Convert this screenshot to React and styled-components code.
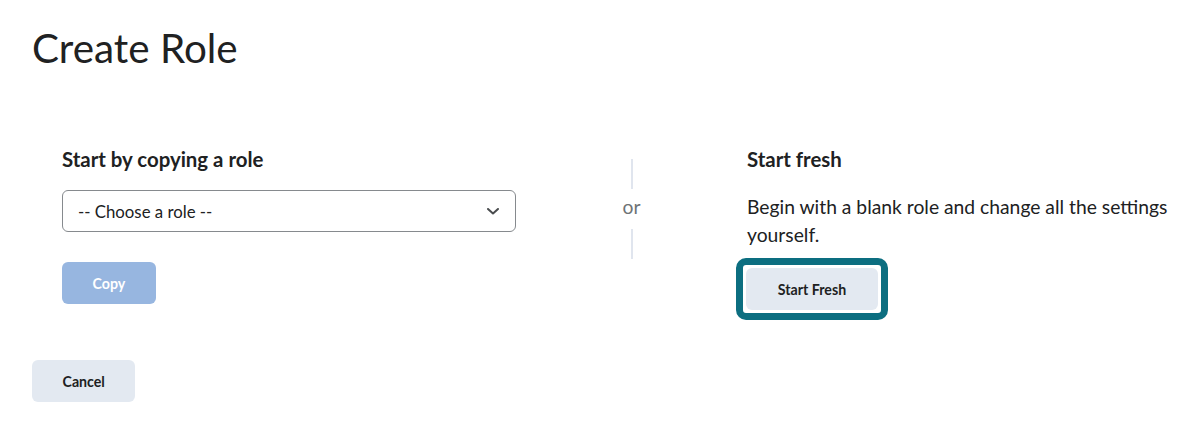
import React, { useState } from "react";
import styled, { createGlobalStyle } from "styled-components";

const GlobalStyle = createGlobalStyle`
    body {
        margin: 0;
        background: #ffffff;
        font-family: Lato, "Open Sans", sans-serif;
        color: #202122;
    }
`

const Page = styled.div`
    padding: 24px 0 0 32px;
`
const Title = styled.h1`
    margin: 0;
    font-size: 40.4px;
    line-height: 48px;
    font-weight: 400;
    color: #202122;
`
const Choices = styled.div`
    display: flex;
    margin-top: 73px;
    padding-left: 30px;
`
const Column = styled.div`
    display: flex;
    flex-direction: column;
    align-items: flex-start;
    width: ${props => props.width || "auto"};
    flex: ${props => props.grow ? 1 : "none"};
`
const Heading = styled.h2`
    margin: 0;
    font-size: 20.4px;
    line-height: 28px;
    font-weight: 700;
    color: #202122;
`
const Text = styled.p`
    margin: 20px 0 0;
    font-size: 19.3px;
    line-height: 28px;
    font-weight: 400;
    color: #202122;
`
const SelectWrap = styled.div`
    position: relative;
    width: 100%;
    margin-top: 17px;
    svg {
        position: absolute;
        right: 17px;
        top: 18px;
        pointer-events: none;
    }
`
const Select = styled.select`
    appearance: none;
    box-sizing: border-box;
    width: 100%;
    height: 42px;
    padding: 0 40px 0 15px;
    border: 1px solid #868a8e;
    border-radius: 6px;
    background: #ffffff;
    font-family: Lato, sans-serif;
    font-size: 16.8px;
    color: #202122;
    outline: none;
`
const Button = styled.button`
    box-sizing: border-box;
    height: 42px;
    min-width: ${props => props.wide || "auto"};
    padding: 0 30.5px;
    border: none;
    border-radius: 6px;
    font-family: Lato, sans-serif;
    font-size: 14.2px;
    font-weight: 700;
    cursor: pointer;
    background: ${props => props.primary ? "#97b6e0" : "#e3e9f1"};
    color: ${props => props.primary ? "#ffffff" : "#202122"};
    margin-top: ${props => props.gap || 0};
`
const FocusRing = styled.span`
    display: inline-flex;
    margin: 9px 0 0 -11px;
    padding: 3px;
    border: 7px solid #0c6e80;
    border-radius: 10px;
    background: #ffffff;
`
const Divider = styled.div`
    width: 231px;
    flex: none;
    display: flex;
    flex-direction: column;
    align-items: center;
    padding-top: 14px;
    span {
        margin: 4px 0 8px;
        font-size: 19.3px;
        line-height: 28px;
        color: #6e7376;
    }
`
const Line = styled.div`
    width: 2px;
    height: 30px;
    background: #e0e5ee;
`
const Footer = styled.div`
    margin-top: 40px;
`

const Chevron = () => (
    <svg width="12" height="7" viewBox="0 0 12 7" fill="none">
        <path d="M1 1 L6 5.5 L11 1" stroke="#494c4e" strokeWidth="2" strokeLinecap="round" strokeLinejoin="round" />
    </svg>
)

const App = () => {
    const [role, setRole] = useState("");
    return (
        <Page>
            <GlobalStyle />
            <Title>Create Role</Title>
            <Choices>
                <Column width="454px">
                    <Heading>Start by copying a role</Heading>
                    <SelectWrap>
                        <Select value={role} onChange={e => setRole(e.target.value)}>
                            <option value="">-- Choose a role --</option>
                            <option value="instructor">Instructor</option>
                            <option value="student">Student</option>
                        </Select>
                        <Chevron />
                    </SelectWrap>
                    <Button primary gap="30px" disabled={!role}>Copy</Button>
                </Column>
                <Divider>
                    <Line />
                    <span>or</span>
                    <Line />
                </Divider>
                <Column grow>
                    <Heading>Start fresh</Heading>
                    <Text>Begin with a blank role and change all the settings yourself.</Text>
                    <FocusRing>
                        <Button wide="132px">Start Fresh</Button>
                    </FocusRing>
                </Column>
            </Choices>
            <Footer>
                <Button>Cancel</Button>
            </Footer>
        </Page>
    )
}

export default App
